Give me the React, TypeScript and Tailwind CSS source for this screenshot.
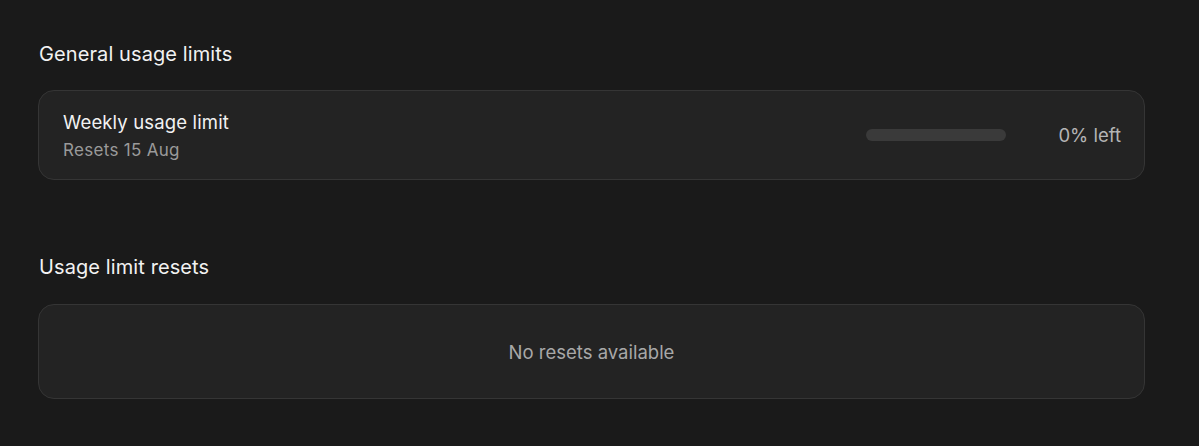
export default function App() {
  return (
    <div
      className="min-h-[446px] w-full bg-[#1a1a1a] pl-[38px] pt-[41px] text-white"
      style={{ fontFamily: "Inter, 'Noto Sans', sans-serif" }}
    >
      <div className="w-[1107px]">
        <h2 className="ml-px text-[20px] leading-[26px] font-normal tracking-[0.1px] text-[#f2f2f2]">
          General usage limits
        </h2>
        <div className="mt-[23px] flex h-[90px] items-center justify-between rounded-[16px] border border-[#353535] bg-[#232323] pl-[24px] pr-[23px]">
          <div className="flex flex-col">
            <span className="text-[18.5px] leading-[24px] tracking-[0.15px] text-[#f2f2f2]">Weekly usage limit</span>
            <span className="mt-[5px] text-[17px] leading-[22px] tracking-[0.3px] text-[#9a9a9a]">Resets 15 Aug</span>
          </div>
          <div className="flex items-center gap-[52px]">
            <div className="h-[12px] w-[140px] rounded-full bg-[#3a3a3a]" />
            <span className="text-[18.5px] leading-[24px] text-[#b5b5b5]">0% left</span>
          </div>
        </div>

        <h2 className="mt-[74px] ml-px text-[20px] leading-[26px] font-normal tracking-[0.1px] text-[#f2f2f2]">
          Usage limit resets
        </h2>
        <div className="mt-[24px] flex h-[95px] items-center justify-center rounded-[16px] border border-[#353535] bg-[#232323]">
          <span className="text-[18.5px] leading-[24px] text-[#a8a8a8]">No resets available</span>
        </div>
      </div>
    </div>
  );
}
